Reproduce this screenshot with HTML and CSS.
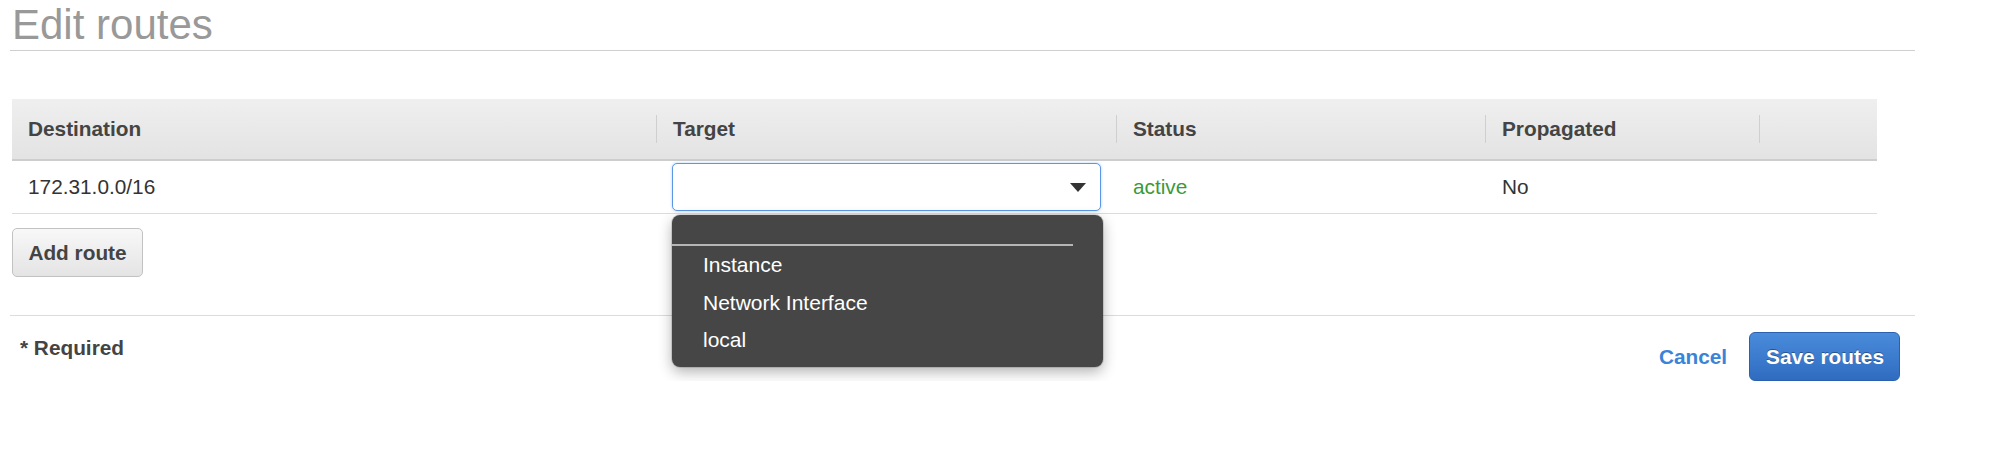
FILE: index.html
```html
<!DOCTYPE html>
<html lang="en">
<head>
<meta charset="utf-8">
<title>Edit routes</title>
<link rel="stylesheet" href="styles.css">
</head>
<body>
<div class="page">
  <h1 class="title">Edit routes</h1>

  <div class="routes">
    <div class="row head">
      <div class="cell">Destination</div>
      <div class="cell div">Target</div>
      <div class="cell div">Status</div>
      <div class="cell div">Propagated</div>
      <div class="cell div"></div>
    </div>
    <div class="row body">
      <div class="cell">172.31.0.0/16</div>
      <div class="cell target">
        <div class="select-wrap">
          <div class="select">
            <span class="arrow"></span>
          </div>
          <div class="menu">
            <div class="menu-blank"></div>
            <div class="menu-item">Instance</div>
            <div class="menu-item">Network Interface</div>
            <div class="menu-item">local</div>
          </div>
        </div>
      </div>
      <div class="cell status">active</div>
      <div class="cell">No</div>
      <div class="cell"></div>
    </div>
  </div>

  <button class="btn-secondary" type="button">Add route</button>

  <div class="footer">
    <div class="required">* Required</div>
    <div class="actions">
      <a class="cancel" href="#">Cancel</a>
      <button class="btn-primary" type="button">Save routes</button>
    </div>
  </div>
</div>
</body>
</html>
```
FILE: styles.css
```css
* { box-sizing: border-box; }

html, body {
  margin: 0;
  padding: 0;
  background: #fff;
}

body {
  font-family: "Liberation Sans", Arial, Helvetica, sans-serif;
  font-size: 20.8px;
  color: #333;
}

.page {
  width: 1905px;
  margin-left: 10px;
}

.title {
  margin: 0;
  padding-left: 2px;
  font-size: 42px;
  line-height: 50px;
  font-weight: normal;
  color: #999;
  border-bottom: 1px solid #cfcfcf;
}

.routes {
  margin-top: 48px;
  margin-left: 2px;
  width: 1865px;
}

.row {
  display: grid;
  grid-template-columns: 644px 460px 369px 274px 118px;
  align-items: center;
}

.head {
  height: 62px;
  background: linear-gradient(#efefef, #e3e3e3);
  border-bottom: 2px solid #cdcdcd;
  font-weight: bold;
  color: #444;
}

.cell {
  padding-left: 16px;
  position: relative;
}

.head .div {
  padding-left: 17px;
}

.head .div::before {
  content: "";
  position: absolute;
  left: 0;
  top: 50%;
  margin-top: -14px;
  width: 1px;
  height: 28px;
  background: #cfcfcf;
}

.body {
  height: 53px;
  border-bottom: 1px solid #dcdcdc;
}

.body .cell + .cell {
  padding-left: 17px;
}

.body .cell.target {
  padding-left: 16px;
}

.status {
  color: #3a9a3a;
}

.select-wrap {
  position: relative;
  width: 429px;
}

.select {
  height: 48px;
  border: 1px solid #5a97e6;
  border-radius: 5px;
  background: #fff;
  box-shadow: 0 0 3px rgba(80, 150, 230, 0.45);
  display: flex;
  align-items: center;
  justify-content: flex-end;
  padding-right: 14px;
}

.arrow {
  width: 0;
  height: 0;
  border-left: 8px solid transparent;
  border-right: 8px solid transparent;
  border-top: 9px solid #333;
}

.menu {
  position: absolute;
  left: 0;
  top: 52px;
  width: 431px;
  background: #464646;
  border-radius: 8px;
  box-shadow: 0 5px 14px rgba(0, 0, 0, 0.3), 0 0 0 1px rgba(0, 0, 0, 0.12);
  padding-bottom: 8px;
  z-index: 10;
  color: #fff;
}

.menu-blank {
  height: 31px;
  width: 401px;
  border-bottom: 2px solid #b5b5b5;
}

.menu-item {
  padding-left: 31px;
  line-height: 37.5px;
  font-size: 21px;
}

.btn-secondary {
  display: block;
  margin-top: 14px;
  margin-left: 2px;
  width: 131px;
  height: 49px;
  padding: 0;
  font-family: inherit;
  font-size: 20.8px;
  font-weight: bold;
  color: #444;
  background: linear-gradient(#f8f8f8, #e4e4e4);
  border: 1px solid #c2c2c2;
  border-radius: 5px;
}

.footer {
  margin-top: 38px;
  border-top: 1px solid #dcdcdc;
  display: flex;
  justify-content: space-between;
  align-items: flex-start;
  padding-right: 15px;
}

.required {
  margin-top: 19px;
  padding-left: 10px;
  font-weight: bold;
  color: #444;
  line-height: 25px;
}

.actions {
  display: flex;
  align-items: center;
  gap: 22px;
  margin-top: 16px;
}

.cancel {
  color: #3a84d8;
  font-weight: bold;
  text-decoration: none;
}

.btn-primary {
  height: 49px;
  padding: 0 15px 0 16px;
  font-family: inherit;
  font-size: 20.8px;
  font-weight: bold;
  color: #fff;
  text-shadow: 0 -1px 0 rgba(0, 0, 0, 0.35);
  background: linear-gradient(#4a8bdb, #2f6cc0);
  border: 1px solid #2a60ad;
  border-radius: 6px;
}
```
